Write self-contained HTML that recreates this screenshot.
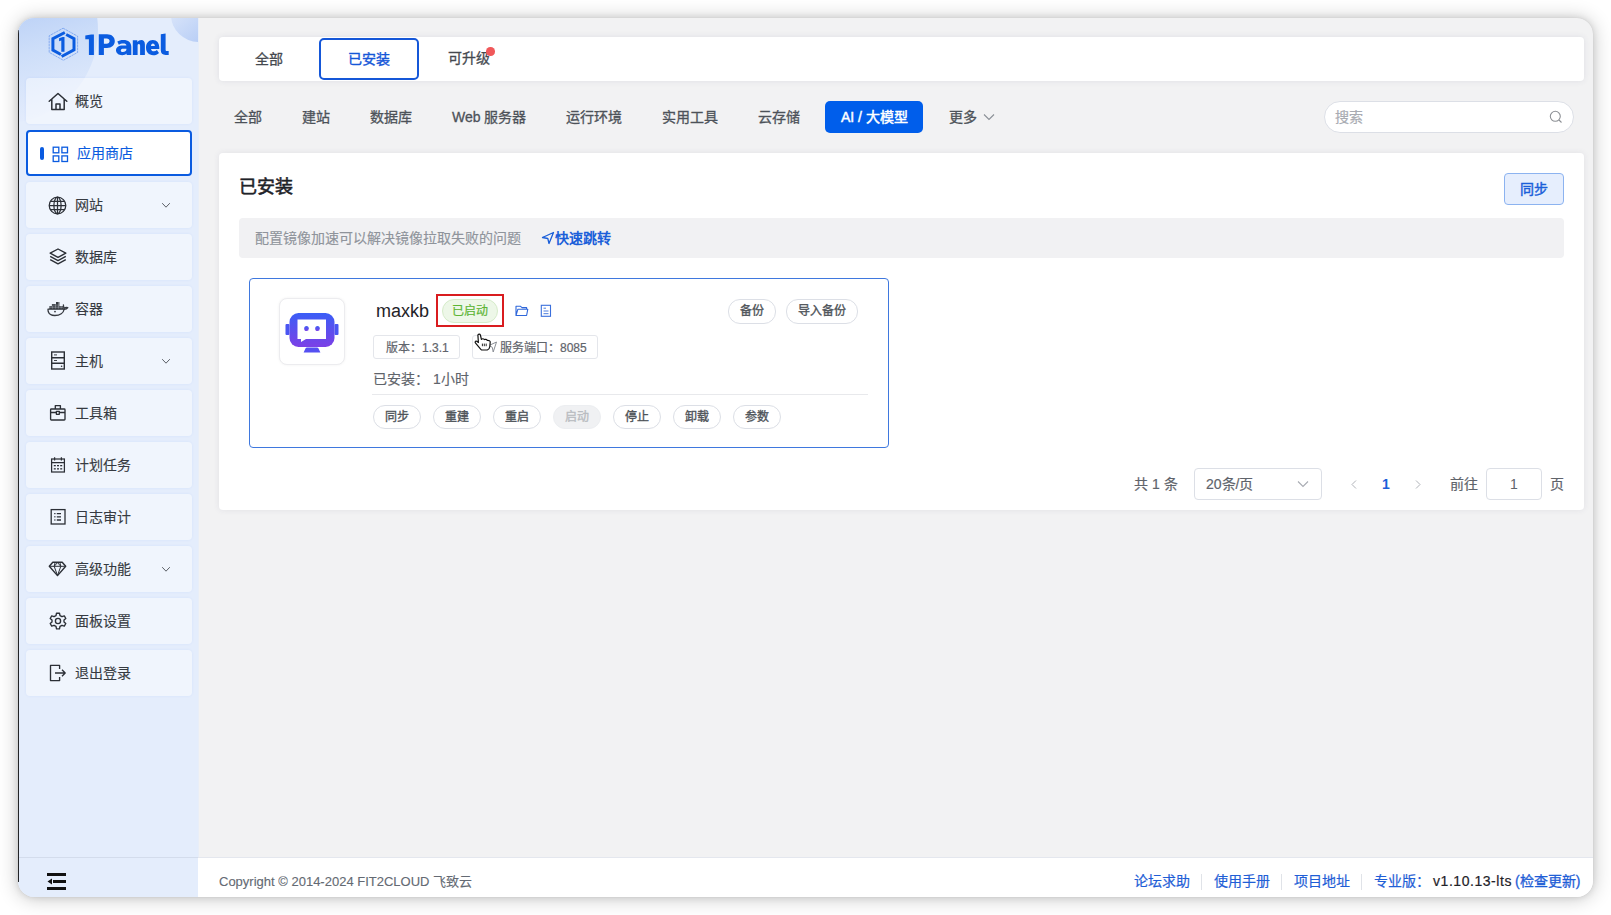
<!DOCTYPE html>
<html lang="zh-CN">
<head>
<meta charset="utf-8">
<style>
*{box-sizing:border-box;margin:0;padding:0}
html,body{width:1611px;height:915px;overflow:hidden;background:#fff;font-family:"Liberation Sans",sans-serif;}
.a{position:absolute;white-space:nowrap}
#win{position:absolute;left:18px;top:18px;width:1575px;height:879px;border-radius:16px;overflow:hidden;background:#f2f2f3;box-shadow:0 1px 20px rgba(0,0,0,0.24),0 0 7px rgba(0,0,0,0.10),0 0 1px rgba(0,0,0,0.15);}
#pg{position:absolute;left:-18px;top:-18px;width:1611px;height:915px}
#side{position:absolute;left:18px;top:18px;width:180px;height:879px;background:#e4edfc;overflow:hidden;box-shadow:1px 0 0 rgba(228,236,250,0.7)}
.menu{position:absolute;left:26px;width:166px;height:46px;border-radius:4px;background:rgba(255,255,255,0.45);box-shadow:0 0 3px rgba(0,94,235,0.07);font-size:14px;color:#363a41;-webkit-text-stroke:0.12px currentColor}
.menu .t{position:absolute;left:49px;top:14px;line-height:18px}
.menu svg.ic{position:absolute;left:22px;top:14px;width:18px;height:18px}
.menu svg.chev{position:absolute;left:135px;top:20px;width:10px;height:7px}
.card{position:absolute;background:#fff;border-radius:4px}
.tab{position:absolute;font-size:14px;color:#45494f;line-height:18px;-webkit-text-stroke:0.3px currentColor}
.cat{position:absolute;top:108px;font-size:14px;color:#4d5259;line-height:18px;-webkit-text-stroke:0.3px currentColor}
.rb{position:absolute;top:405px;width:48px;height:24px;border:1px solid #dcdfe6;border-radius:12px;font-size:12px;color:#4e5359;text-align:center;line-height:22px;background:#fff;-webkit-text-stroke:0.35px currentColor}
.tag{position:absolute;top:335px;height:24px;border:1px solid #e4e6eb;border-radius:3px;font-size:12px;color:#5f646b;line-height:24px;-webkit-text-stroke:0.2px currentColor}
.ft{position:absolute;top:872px;font-size:14px;line-height:18px;color:#1f5ed6;-webkit-text-stroke:0.2px currentColor}
.sep{position:absolute;top:874px;width:1px;height:16px;background:#e0e3e8}
</style>
</head>
<body>
<div id="win"><div id="pg">
  <!-- SIDEBAR -->
  <div id="side">
    <div class="a" style="left:-106px;top:-81px;width:186px;height:186px;border-radius:50%;background:linear-gradient(165deg,#9dbcf3 0%,#b6cdf6 38%,#cddef9 62%,#e2ebfc 90%)"></div>
    <div class="a" style="left:153px;top:-30px;width:56px;height:54px;border-radius:50%;background:linear-gradient(140deg,#e2ebfb 10%,#aac4f4 100%)"></div>
    <div class="a" style="left:0;top:839px;width:180px;height:1px;background:#d3dcec"></div>
  </div>
  <div class="a" style="left:18px;top:30px;width:1px;height:852px;background:#232427"></div>
  <!-- logo -->
  <svg class="a" style="left:45px;top:24px" width="40" height="40" viewBox="0 0 40 40">
    <polygon points="18.1,4.2 32.6,12.2 32.6,28.4 18.4,36.3 4.2,28.4 4.2,11.8" fill="none" stroke="#2f6fe6" stroke-width="0.6" stroke-dasharray="2.5 0.6" opacity="0.75"/>
    <path d="M19.8 8.5 L7.9 14.6 V26.1 L15.9 30.5 M21.2 10.5 L29 14.7 V25.9 L16.6 32.5" fill="none" stroke="#0b5ce0" stroke-width="3"/>
    <path d="M14.1 14.3 L17.6 13.1 H19.5 V27.8 H16.3 V16.6 L14.1 17.3 Z" fill="#0b5ce0"/>
  </svg>
  <svg class="a" style="left:80px;top:26px" width="95" height="36" viewBox="0 0 95 36" fill="#0b5ce0" fill-rule="evenodd">
    <path d="M5.3 9.6 L11.2 8.5 H13.9 V28.9 H8.9 V13.2 H5.3 Z"/>
    <path d="M18.75 8.2 H27 C31.8 8.2 34.8 11 34.8 15.1 C34.8 19.2 31.8 22 27 22 H23.9 V28.9 H18.75 Z M23.9 12.5 V17.7 H26.6 C28.4 17.7 29.6 16.8 29.6 15.1 C29.6 13.4 28.4 12.5 26.6 12.5 Z"/>
    <path d="M37.3 15.6 C38.8 14.4 40.8 13.9 43.3 13.9 C48.4 13.9 51.3 16.2 51.3 20.8 V28.9 H46.6 V27.6 C45.6 28.7 44.1 29.2 42.2 29.2 C38.6 29.2 36 27.3 36 24.3 C36 21.2 38.7 19.5 42.6 19.5 H46.4 C46.3 18.2 45.2 17.6 43.2 17.6 C41.6 17.6 40 18 38.8 18.8 Z M46.4 22.8 H43.2 C41.6 22.8 40.8 23.4 40.8 24.4 C40.8 25.4 41.7 26 43 26 C44.7 26 46.4 25.2 46.4 23.6 Z"/>
    <path d="M52.8 14.2 H57.3 V15.9 C58.3 14.6 59.7 13.9 61.4 13.9 C63.6 13.9 64.9 15.4 64.9 18.4 V28.9 H60.1 V19.6 C60.1 18.5 59.5 17.9 58.7 17.9 C57.9 17.9 57.6 18.6 57.6 19.8 V28.9 H52.8 Z"/>
    <path d="M79.3 23 H71 C71.3 24.5 72.3 25.3 73.8 25.3 C75 25.3 76 24.9 76.9 24.1 L79 26.9 C77.6 28.4 75.6 29.2 73.2 29.2 C68.9 29.2 66 26.2 66 21.6 C66 17 68.8 13.9 72.8 13.9 C76.8 13.9 79.3 16.9 79.3 21.5 Z M71 19.9 H74.9 C74.7 18.5 73.9 17.6 72.9 17.6 C71.9 17.6 71.2 18.5 71 19.9 Z"/>
    <path d="M80.8 8.2 L85.6 7.4 V23.8 C85.6 24.7 86 25.1 86.9 25.1 H88.7 V28.9 H85.6 C82.4 28.9 80.8 27.3 80.8 24.3 Z"/>
  </svg>

  <!-- menu items -->
  <div class="menu" style="top:78px">
    <svg class="ic" style="left:22px;top:14px;width:20px;height:19px" viewBox="0 0 20 19"><path d="M1.2 9.3 L10 1.5 L18.8 9.3 M3.8 7 V17.5 H16.2 V7 M8 17.5 V12 H12 V17.5" fill="none" stroke="#2b2f36" stroke-width="1.5" stroke-linejoin="round" stroke-linecap="round"/></svg>
    <span class="t">概览</span></div>
  <div class="menu" style="top:130px;background:#fff;border:2px solid #0a5be0;box-shadow:none;color:#0a5be0">
    <div class="a" style="left:12px;top:15px;width:4px;height:13px;border-radius:2px;background:#0a5be0"></div>
    <svg class="ic" style="left:24px;top:14px;width:17px;height:17px" viewBox="0 0 17 17"><g fill="none" stroke="#0a5be0" stroke-width="1.3"><rect x="1.2" y="1.2" width="5.6" height="5.6"/><rect x="9.9" y="1.2" width="5.6" height="5.6"/><rect x="1.2" y="9.9" width="5.6" height="5.6"/><rect x="9.9" y="9.9" width="5.6" height="5.6"/></g></svg>
    <span class="t" style="left:49px;top:12px">应用商店</span></div>
  <div class="menu" style="top:182px">
    <svg class="ic" style="left:22px;top:14px;width:19px;height:19px" viewBox="0 0 19 19"><g fill="none" stroke="#2b2f36" stroke-width="1.25"><circle cx="9.5" cy="9.5" r="8.3"/><ellipse cx="9.5" cy="9.5" rx="3.6" ry="8.3"/><path d="M1.2 9.5 H17.8 M2.4 5.3 H16.6 M2.4 13.7 H16.6 M9.5 1.2 V17.8"/></g></svg>
    <span class="t">网站</span>
    <svg class="chev" viewBox="0 0 10 7"><path d="M1.2 1.2 L5 5.2 L8.8 1.2" fill="none" stroke="#5a5e65" stroke-width="1"/></svg></div>
  <div class="menu" style="top:234px">
    <svg class="ic" style="left:23px;top:14px;width:18px;height:17px" viewBox="0 0 18 17"><g fill="none" stroke="#2b2f36" stroke-width="1.4" stroke-linejoin="round"><path d="M9 1 L16.8 5.2 L9 9.4 L1.2 5.2 Z"/><path d="M1.2 8.4 L9 12.6 L16.8 8.4"/><path d="M1.2 11.6 L9 15.8 L16.8 11.6"/></g></svg>
    <span class="t">数据库</span></div>
  <div class="menu" style="top:286px">
    <svg class="ic" style="left:18px;top:12px;width:28px;height:22px" viewBox="0 0 28 22"><g fill="#363a41"><rect x="5.3" y="8.2" width="13.9" height="3"/><rect x="7.9" y="6" width="7.5" height="2.3"/><rect x="12" y="4" width="3.4" height="2.1"/></g><g stroke="#eef3fd" stroke-width="0.5" opacity="0.6"><path d="M8.5 8.2 V11.2 M11.5 6 V11.2 M14.5 4 V11.2 M17.2 8.2 V11.2 M5.3 9.7 H19.2 M7.9 7.1 H15.4"/></g><g fill="none" stroke="#363a41" stroke-width="1.3" stroke-linejoin="round" stroke-linecap="round"><path d="M4 11.2 H20.2 C19.6 14.8 16 17.5 10.8 17.5 C7.5 17.5 5 16 4.3 13.8 C4.1 13 4 12 4 11.2 Z"/><path d="M19.4 7 L19.9 10.3 C21.2 9.4 22.6 9.3 23.8 9.6 C23 10.9 21.7 11.4 20.3 11.4"/></g><circle cx="11" cy="13.6" r="0.9" fill="#363a41"/></svg>
    <span class="t">容器</span></div>
  <div class="menu" style="top:338px">
    <svg class="ic" style="left:22px;top:13px;width:18px;height:19px" viewBox="0 0 18 19"><g fill="none" stroke="#2b2f36" stroke-width="1.4"><rect x="3.7" y="1" width="12.6" height="17"/><path d="M3.7 6.7 H16.3 M3.7 12.3 H16.3"/></g><path d="M6 3.9 H9 M6 9.5 H9" stroke="#2b2f36" stroke-width="0.9"/><circle cx="13.6" cy="15.2" r="0.8" fill="#2b2f36"/></svg>
    <span class="t">主机</span>
    <svg class="chev" viewBox="0 0 10 7"><path d="M1.2 1.2 L5 5.2 L8.8 1.2" fill="none" stroke="#5a5e65" stroke-width="1"/></svg></div>
  <div class="menu" style="top:390px">
    <svg class="ic" style="left:22px;top:14px;width:18px;height:17px" viewBox="0 0 18 17"><g fill="none" stroke="#2b2f36" stroke-width="1.35" stroke-linejoin="round"><rect x="2.6" y="5" width="14.4" height="11" rx="0.8"/><path d="M7.3 5 V1.6 H12.4 V5 M2.6 8.5 H8.4 M11.3 8.5 H17"/><rect x="8.4" y="7.3" width="2.9" height="3"/></g></svg>
    <span class="t">工具箱</span></div>
  <div class="menu" style="top:442px">
    <svg class="ic" style="left:22px;top:14px;width:18px;height:17px" viewBox="0 0 18 17"><g fill="none" stroke="#2b2f36" stroke-width="1.25"><rect x="3.6" y="3" width="12.8" height="13"/><path d="M3.6 6.6 H16.4 M6.6 1.2 V4.4 M13.4 1.2 V4.4"/></g><g fill="#2b2f36"><rect x="5.8" y="9" width="2" height="1.3"/><rect x="9" y="9" width="2" height="1.3"/><rect x="12.2" y="9" width="2" height="1.3"/><rect x="5.8" y="12.2" width="2" height="1.3"/><rect x="9" y="12.2" width="2" height="1.3"/><rect x="12.2" y="12.2" width="2" height="1.3"/></g></svg>
    <span class="t">计划任务</span></div>
  <div class="menu" style="top:494px">
    <svg class="ic" style="left:22px;top:14px;width:18px;height:18px" viewBox="0 0 18 18"><g fill="none" stroke="#2b2f36" stroke-width="1.3"><rect x="3.2" y="1.6" width="13.8" height="14.4"/><path d="M8.8 5.6 H13 M8.8 8.8 H13 M8.8 12 H13"/></g><g fill="#2b2f36"><rect x="6.2" y="5" width="1.3" height="1.2"/><rect x="6.2" y="8.2" width="1.3" height="1.2"/><rect x="6.2" y="11.4" width="1.3" height="1.2"/></g></svg>
    <span class="t">日志审计</span></div>
  <div class="menu" style="top:546px">
    <svg class="ic" style="left:22px;top:14px;width:19px;height:17px" viewBox="0 0 19 17"><g fill="none" stroke="#2b2f36" stroke-width="1.4" stroke-linejoin="round"><path d="M1.3 6.3 L4.8 2.2 H14.2 L17.7 6.3 L9.5 15.6 Z"/><path d="M1.3 6.3 H17.7 M6.2 6.3 L9.5 15.6 L12.8 6.3 M7.2 2.2 L6.2 6.3 L9.5 2.6 L12.8 6.3 L11.8 2.2" stroke-width="1"/></g></svg>
    <span class="t">高级功能</span>
    <svg class="chev" viewBox="0 0 10 7"><path d="M1.2 1.2 L5 5.2 L8.8 1.2" fill="none" stroke="#5a5e65" stroke-width="1"/></svg></div>
  <div class="menu" style="top:598px">
    <svg class="ic" style="left:23px;top:14px;width:18px;height:18px" viewBox="0 0 18 18"><g fill="none" stroke="#2b2f36" stroke-width="1.35" stroke-linejoin="round"><path d="M7.5 1.2 H10.5 L11 3.6 L13 4.7 L15.3 3.9 L16.8 6.5 L15 8.1 V9.9 L16.8 11.5 L15.3 14.1 L13 13.3 L11 14.4 L10.5 16.8 H7.5 L7 14.4 L5 13.3 L2.7 14.1 L1.2 11.5 L3 9.9 V8.1 L1.2 6.5 L2.7 3.9 L5 4.7 L7 3.6 Z"/><circle cx="9" cy="9" r="2.6"/></g></svg>
    <span class="t">面板设置</span></div>
  <div class="menu" style="top:650px">
    <svg class="ic" style="left:23px;top:14px;width:18px;height:18px" viewBox="0 0 18 18"><g fill="none" stroke="#2b2f36" stroke-width="1.35" stroke-linejoin="round"><path d="M10.6 5 V1.4 H1.5 V16.6 H10.6 V13"/><path d="M6 9 H16.2 M13 5.8 L16.2 9 L13 12.2"/></g></svg>
    <span class="t">退出登录</span></div>

  <!-- sidebar toggle -->
  <svg class="a" style="left:47px;top:873px" width="19" height="17" viewBox="0 0 19 17"><g fill="#111"><rect x="0" y="0" width="19" height="3"/><rect x="0" y="14" width="19" height="3"/><rect x="6" y="7" width="13" height="3"/><path d="M0.5 8.5 L5 5.5 V11.5 Z"/></g></svg>

  <!-- TOP TABS -->
  <div class="card" style="left:219px;top:37px;width:1365px;height:44px;box-shadow:0 0 6px rgba(50,60,100,0.10)">
  </div>
  <div class="tab" style="left:255px;top:50px">全部</div>
  <div class="a" style="left:319px;top:38px;width:100px;height:42px;border:2px solid #1557d8;border-radius:5px"></div>
  <div class="tab" style="left:348px;top:50px;color:#1557d8;-webkit-text-stroke:0.4px #1557d8">已安装</div>
  <div class="tab" style="left:448px;top:49px">可升级</div>
  <div class="a" style="left:486px;top:47px;width:8.5px;height:8.5px;border-radius:50%;background:#f0585a"></div>

  <!-- CATEGORY ROW -->
  <div class="cat" style="left:234px">全部</div>
  <div class="cat" style="left:302px">建站</div>
  <div class="cat" style="left:370px">数据库</div>
  <div class="cat" style="left:452px">Web 服务器</div>
  <div class="cat" style="left:566px">运行环境</div>
  <div class="cat" style="left:662px">实用工具</div>
  <div class="cat" style="left:758px">云存储</div>
  <div class="a" style="left:825px;top:101px;width:98px;height:32px;border-radius:5px;background:#005eeb"></div>
  <div class="cat" style="left:841px;color:#fff;-webkit-text-stroke:0.45px #fff">AI / 大模型</div>
  <div class="cat" style="left:949px">更多</div>
  <svg class="a" style="left:983px;top:113px" width="12" height="8" viewBox="0 0 12 8"><path d="M1 1.5 L6 6.5 L11 1.5" fill="none" stroke="#8a8f96" stroke-width="1.1"/></svg>

  <!-- SEARCH -->
  <div class="a" style="left:1324px;top:101px;width:250px;height:32px;border:1px solid #dcdfe6;border-radius:16px;background:#fff"></div>
  <div class="a" style="left:1335px;top:108px;font-size:14px;line-height:18px;color:#a8abb2;-webkit-text-stroke:0.2px currentColor">搜索</div>
  <svg class="a" style="left:1549px;top:110px" width="14" height="14" viewBox="0 0 14 14"><circle cx="6.3" cy="6.3" r="5" fill="none" stroke="#8d9095" stroke-width="1.1"/><path d="M10 10 L12.5 12.5" stroke="#8d9095" stroke-width="1.1"/></svg>

  <!-- MAIN CARD -->
  <div class="card" style="left:219px;top:153px;width:1365px;height:357px;box-shadow:0 0 6px rgba(50,60,100,0.09)"></div>
  <div class="a" style="left:239px;top:175px;font-size:18px;line-height:24px;color:#1f2329;-webkit-text-stroke:0.55px currentColor">已安装</div>
  <div class="a" style="left:1504px;top:173px;width:60px;height:32px;border:1px solid #8cb3f0;border-radius:4px;background:#e6eefd"></div>
  <div class="a" style="left:1520px;top:180px;font-size:14px;line-height:18px;color:#1b5fd9;-webkit-text-stroke:0.45px currentColor">同步</div>

  <div class="a" style="left:239px;top:218px;width:1325px;height:40px;border-radius:4px;background:#f1f1f3"></div>
  <div class="a" style="left:255px;top:229px;font-size:14px;line-height:18px;color:#8f949b;-webkit-text-stroke:0.15px currentColor">配置镜像加速可以解决镜像拉取失败的问题</div>
  <svg class="a" style="left:541px;top:231px" width="14" height="14" viewBox="0 0 14 14"><path d="M1.5 6.5 L12.5 1.5 L8 12.5 L6.8 7.5 Z" fill="none" stroke="#1b5fd9" stroke-width="1.3" stroke-linejoin="round"/></svg>
  <div class="a" style="left:555px;top:229px;font-size:14px;line-height:18px;font-weight:bold;color:#1b5fd9">快速跳转</div>

  <!-- APP CARD -->
  <div class="a" style="left:249px;top:278px;width:640px;height:170px;border:1px solid #3f78de;border-radius:4px;background:#fff"></div>
  <div class="a" style="left:279px;top:298px;width:66px;height:67px;border:1px solid #ececef;border-radius:8px;background:#fff;box-shadow:0 0 3px rgba(0,0,0,0.06)"></div>
  <svg class="a" style="left:285px;top:312px" width="54" height="41" viewBox="0 0 54 41">
    <defs><linearGradient id="rg" x1="0" y1="0" x2="0" y2="1"><stop offset="0" stop-color="#3a5ef6"/><stop offset="1" stop-color="#7c40e6"/></linearGradient></defs>
    <rect x="0.5" y="12" width="4" height="11" rx="1" fill="#4a55f2"/>
    <rect x="49.5" y="12" width="4" height="11" rx="1" fill="#4a55f2"/>
    <rect x="4.5" y="1" width="45" height="34" rx="9" fill="url(#rg)"/>
    <path d="M12.5 7.5 H41 V27 H21 L16 30 V27 H12.5 Z" fill="#fff"/>
    <ellipse cx="21.5" cy="16.5" rx="2.3" ry="2.6" fill="url(#rg)"/>
    <ellipse cx="32.5" cy="16.5" rx="2.3" ry="2.6" fill="url(#rg)"/>
    <path d="M18.6 40.5 L20.6 36.3 Q21 35.4 22 35.4 H32 Q33 35.4 33.4 36.3 L35.4 40.5 Z" fill="#5550f2"/>
  </svg>
  <div class="a" style="left:376px;top:300px;font-size:18px;line-height:22px;color:#1f2329">maxkb</div>
  <div class="a" style="left:442px;top:299px;width:56px;height:24px;border:1px solid #d6ecca;border-radius:12px;background:#edf7e8"></div>
  <div class="a" style="left:452px;top:303px;font-size:12px;line-height:16px;color:#5db536;-webkit-text-stroke:0.2px currentColor">已启动</div>
  <div class="a" style="left:436px;top:294px;width:68px;height:33px;border:2px solid #d91c1f"></div>
  <svg class="a" style="left:514px;top:304px" width="16" height="14" viewBox="0 0 16 14"><path d="M2 11.5 V2.2 H6.3 L8 3.6 H12.6 V5.2 M2 11.5 L3.9 5.2 H13.8 L12.6 11.5 Z" fill="none" stroke="#2f67da" stroke-width="1.1" stroke-linejoin="round"/></svg>
  <svg class="a" style="left:540px;top:304px" width="12" height="14" viewBox="0 0 12 14"><rect x="1.3" y="1.3" width="9.2" height="11" fill="none" stroke="#3a6fdc" stroke-width="1.1"/><path d="M3.5 4.2 H6 M3.5 7 H8.5" stroke="#3a6fdc" stroke-width="0.9"/><path d="M3.5 9.6 H8.5" stroke="#3a6fdc" stroke-width="1.2" opacity="0.75"/></svg>
  <div class="rb" style="left:728px;top:299px;width:48px;height:25px">备份</div>
  <div class="rb" style="left:786px;top:299px;width:72px;height:25px">导入备份</div>

  <div class="tag" style="left:373px;width:87px;padding-left:12px">版本：1.3.1</div>
  <div class="tag" style="left:472px;width:126px;padding-left:27px">服务端口：8085</div>
  <div class="a" style="left:373px;top:370px;font-size:14px;line-height:18px;color:#5f646b;-webkit-text-stroke:0.15px currentColor">已安装：&nbsp;1小时</div>
  <div class="a" style="left:372px;top:394px;width:496px;height:1px;background:#e8e9ec"></div>
  <div class="rb" style="left:373px">同步</div>
  <div class="rb" style="left:433px">重建</div>
  <div class="rb" style="left:493px">重启</div>
  <div class="rb" style="left:553px;background:#f0f1f3;border-color:#eceef1;color:#b9bcc1">启动</div>
  <div class="rb" style="left:613px">停止</div>
  <div class="rb" style="left:673px">卸载</div>
  <div class="rb" style="left:733px">参数</div>
  <!-- cursor -->
  <svg class="a" style="left:488px;top:341px" width="10" height="12" viewBox="0 0 10 12"><path d="M1 4.5 L8.5 1 L5.2 11 L4.3 6.3 Z" fill="none" stroke="#8a8e95" stroke-width="1" stroke-linejoin="round"/></svg>
  <svg class="a" style="left:472px;top:332px" width="20" height="20" viewBox="0 0 20 20"><path d="M5.9 3.2 C6.1 2 7.9 1.8 8.4 3 L9.4 7.4 C10.2 6.4 12 6.6 12.3 7.6 C13.2 7 14.8 7.4 15.2 8.4 C16.8 8.2 18.5 8.8 18.2 10.2 L17.8 14.5 C17.6 16.5 16.5 17.6 15.3 18 H9.6 C8.8 17.6 8.4 17 8 16.4 L3.6 11.2 C2.6 10 3.4 8.5 4.8 9.3 L6.4 10.5 Z" fill="#fff" stroke="#111" stroke-width="1.2" stroke-linejoin="round"/><path d="M10.4 11.6 V14.2 M12.3 11.6 V14.2 M14.2 11.6 V14.2" stroke="#111" stroke-width="0.9"/></svg>

  <!-- PAGINATION -->
  <div class="a" style="left:1134px;top:475px;font-size:14px;line-height:18px;color:#5f646b;-webkit-text-stroke:0.2px currentColor">共 1 条</div>
  <div class="a" style="left:1194px;top:468px;width:128px;height:32px;border:1px solid #dcdfe6;border-radius:4px;background:#fff"></div>
  <div class="a" style="left:1206px;top:475px;font-size:14px;line-height:18px;color:#5f646b;-webkit-text-stroke:0.2px currentColor">20条/页</div>
  <svg class="a" style="left:1297px;top:480px" width="12" height="8" viewBox="0 0 12 8"><path d="M1 1.5 L6 6.5 L11 1.5" fill="none" stroke="#a8abb2" stroke-width="1.1"/></svg>
  <svg class="a" style="left:1350px;top:479px" width="8" height="11" viewBox="0 0 8 11"><path d="M6 1.5 L2 5.5 L6 9.5" fill="none" stroke="#b0b3b9" stroke-width="1"/></svg>
  <div class="a" style="left:1382px;top:475px;font-size:14px;line-height:18px;font-weight:bold;color:#1b5fd9">1</div>
  <svg class="a" style="left:1414px;top:479px" width="8" height="11" viewBox="0 0 8 11"><path d="M2 1.5 L6 5.5 L2 9.5" fill="none" stroke="#b0b3b9" stroke-width="1"/></svg>
  <div class="a" style="left:1450px;top:475px;font-size:14px;line-height:18px;color:#5f646b;-webkit-text-stroke:0.2px currentColor">前往</div>
  <div class="a" style="left:1486px;top:468px;width:56px;height:32px;border:1px solid #dcdfe6;border-radius:4px;background:#fff"></div>
  <div class="a" style="left:1510px;top:475px;font-size:14px;line-height:18px;color:#5f646b">1</div>
  <div class="a" style="left:1550px;top:475px;font-size:14px;line-height:18px;color:#5f646b;-webkit-text-stroke:0.2px currentColor">页</div>

  <!-- FOOTER -->
  <div class="a" style="left:198px;top:857px;width:1395px;height:40px;background:#fff;border-top:1px solid #e4e7ee"></div>
  <div class="a" style="left:219px;top:874px;font-size:13px;line-height:16px;color:#646a73;-webkit-text-stroke:0.12px currentColor">Copyright © 2014-2024 FIT2CLOUD 飞致云</div>
  <div class="ft" style="left:1134px">论坛求助</div>
  <div class="sep" style="left:1201px"></div>
  <div class="ft" style="left:1214px">使用手册</div>
  <div class="sep" style="left:1281px"></div>
  <div class="ft" style="left:1294px">项目地址</div>
  <div class="sep" style="left:1361px"></div>
  <div class="ft" style="left:1374px">专业版：</div>
  <div class="ft" style="left:1433px;color:#1f2329;letter-spacing:0.55px">v1.10.13-lts</div>
  <div class="ft" style="left:1515px;-webkit-text-stroke:0.3px currentColor">(检查更新)</div>
</div></div>
</body>
</html>
